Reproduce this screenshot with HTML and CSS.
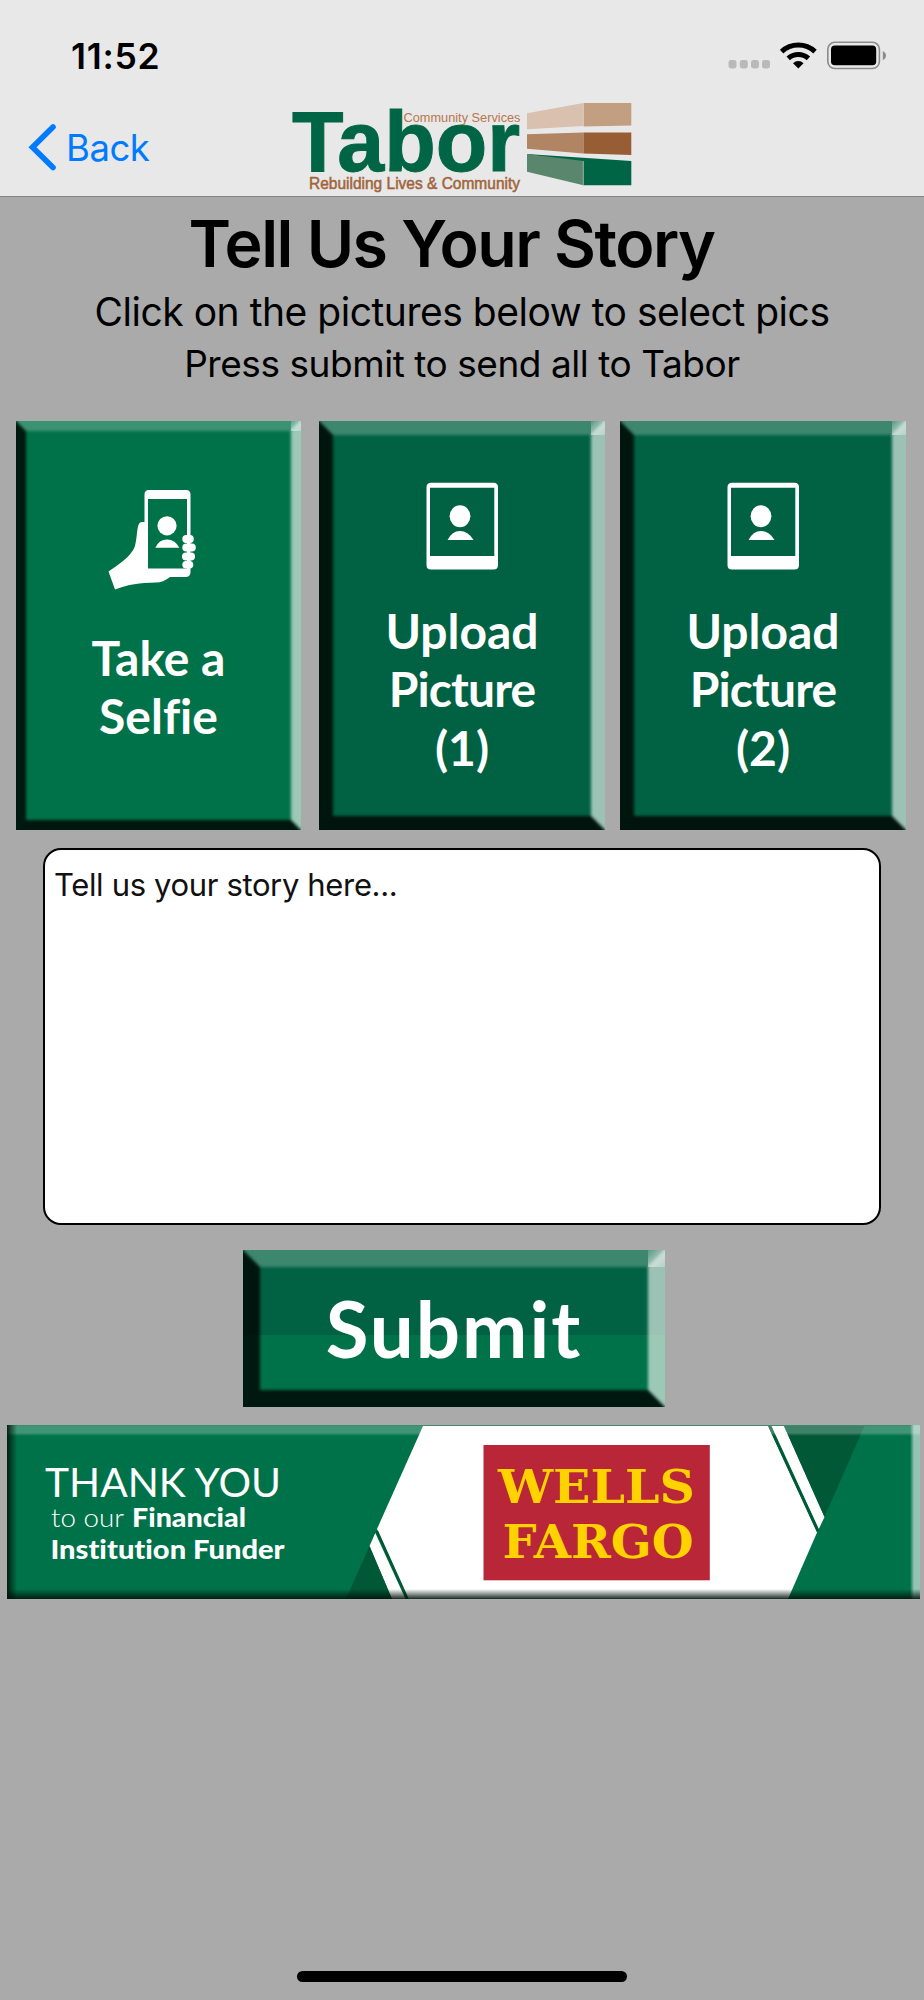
FILE: index.html
```html
<!DOCTYPE html>
<html lang="en">
<head>
<meta charset="utf-8">
<title>Tell Us Your Story</title>
<link rel="stylesheet" href="styles.css">
</head>
<body>
<div class="screen">
  <header class="top">
    <div class="status">
      <span class="time">11:52</span>
      <svg class="indicators" width="160" height="30" viewBox="727 41 160 30">
        <g fill="#b9b9b9">
          <rect x="728.5" y="60" width="8" height="8.4" rx="2.4"/>
          <rect x="739.8" y="60" width="8" height="8.4" rx="2.4"/>
          <rect x="751" y="60" width="8" height="8.4" rx="2.4"/>
          <rect x="762" y="60" width="8" height="8.4" rx="2.4"/>
        </g>
        <g fill="none" stroke="#000" stroke-width="5">
          <path d="M781.6 51.6A24.5 24.5 0 0 1 815 51.6"/>
          <path d="M788.2 58.3A15 15 0 0 1 808.4 58.3"/>
        </g>
        <path d="M798.3 68.4L793 63.2A7.5 7.5 0 0 1 803.6 63.2Z"/>
        <rect x="827.8" y="42.3" width="51.6" height="26.2" rx="7" fill="none" stroke="#8b8b8b" stroke-width="1.6"/>
        <rect x="831" y="45.6" width="45.2" height="19.6" rx="3.8"/>
        <path d="M882.8 51V60.2Q886 58.6 886 55.6T882.8 51Z" fill="#8b8b8b"/>
      </svg>
    </div>
    <nav class="nav">
      <a class="back"><svg width="30" height="48" viewBox="28 123 30 48"><path d="M53 127L32.5 147.3L53 167.6" fill="none" stroke="#007aff" stroke-width="5.6" stroke-linecap="round"/></svg><span>Back</span></a>
      <svg class="logo" width="346" height="96" viewBox="287 100 346 96" font-family="'Liberation Sans', Arial, sans-serif">
        <text x="292" y="170.800" font-size="85" font-weight="700" fill="#006544" stroke="#006544" textLength="228" lengthAdjust="spacingAndGlyphs">Tabor</text>
        <text x="403.5" y="122" font-size="13.6" fill="#b9754e" textLength="117" lengthAdjust="spacingAndGlyphs">Community Services</text>
        <text x="309" y="189.3" font-size="15.8" fill="#a0643a" stroke="#a0643a" stroke-width=".5" textLength="211" lengthAdjust="spacingAndGlyphs">Rebuilding Lives &amp; Community</text>
        <path fill="#dac1af" d="M527 113.3L583.5 103V126L527 129.3Z"/>
        <path fill="#c39f81" d="M583.5 103H631.3V125.6L583.5 126.4Z"/>
        <path fill="#b18463" d="M527 134.3L583.5 132.6V153.5L527 148.8Z"/>
        <path fill="#975d34" d="M583.5 132.6H631.3V155L583.5 153.5Z"/>
        <path fill="#006544" d="M527 154L631.3 161V185.3H583.5Z"/>
        <path fill="#5a866d" d="M527 154L583.5 161V185.3L527 171.8Z"/>
        <path fill="none" stroke="#e2d3c7" stroke-opacity=".6" d="M583.3 103V126M583.3 161V185"/>
      </svg>
    </nav>
  </header>

  <main>
    <h1>Tell Us Your Story</h1>
    <p class="lead"><span class="line-a">Click on the pictures below to select pics</span><br><span class="line-b">Press submit to send all to Tabor</span></p>

    <div class="tiles">
      <button class="tile bevel selfie">
        <svg width="90" height="102" viewBox="106 488 90 102">
          <path fill="#fff" fill-rule="evenodd" d="M148 490H185Q189.500 490 189.500 494.500V572Q189.500 577 184.500 577H169Q162 582.500 155 582.500C138 583 128 584 114 589.500L107.500 571.500C118 564 130 557 134 546C137 536 135 522 141 522H143.500V494.500Q143.500 490 148 490ZM147 499V568.500H186V499Z"/>
          <g fill="#fff">
            <circle cx="166" cy="525.8" r="9.6"/>
            <path d="M154.300 547.800Q158 539.500 166 539.500T178.300 547.800Z"/>
          </g>
          <g fill="#fff">
            <rect x="181.300" y="535" width="11.500" height="8" rx="4"/>
            <rect x="181.300" y="543.500" width="13.500" height="8" rx="4"/>
            <rect x="181" y="552.500" width="13" height="8" rx="4"/>
            <rect x="181.300" y="561" width="11" height="7.500" rx="3.700"/>
          </g>
        </svg>
        <span class="label">Take a<br>Selfie</span>
      </button>
      <button class="tile bevel deep">
        <svg width="72" height="88" viewBox="426 482 72 88"><use href="#portrait"/></svg>
        <span class="label">Upload<br><span class="tight">Picture</span><br>(1)</span>
      </button>
      <button class="tile bevel deep">
        <svg width="72" height="88" viewBox="426 482 72 88">
          <g id="portrait" fill="#fff">
            <path fill-rule="evenodd" d="M431 482.800H493.500Q498 482.800 498 487.300V565Q498 569.500 493.500 569.500H431Q426.500 569.500 426.500 565V487.300Q426.500 482.800 431 482.800ZM430 487.700V556H494.300V487.700Z"/>
            <ellipse cx="460" cy="516.300" rx="10.400" ry="11"/>
            <path d="M447.600 540Q452 531 460 531T473.600 540Z"/>
          </g>
        </svg>
        <span class="label">Upload<br><span class="tight">Picture</span><br>(2)</span>
      </button>
    </div>

    <textarea class="story" spellcheck="false">Tell us your story here...</textarea>

    <button class="submit bevel">Submit</button>

    <section class="banner">
      <svg width="913" height="174" viewBox="7 1425 913 174">
        <rect x="7" y="1425" width="913" height="174" fill="#00724a"/>
        <path fill="#fff" d="M423 1426H768L817 1532.500L788 1599H408L377 1529Z"/>
        <path fill="#fff" d="M375.300 1533L369.500 1546L392 1599H405.500Z"/>
        <path fill="#005836" d="M369.500 1546L346 1599H392Z"/>
        <path fill="#fff" d="M771.500 1426H784L824.500 1517L818.800 1529Z"/>
        <path fill="#005836" d="M784 1426H864.500L824.500 1517Z"/>
        <path stroke="#005836" stroke-width="2.600" d="M376.800 1531L407.500 1599M769.500 1426L818 1531"/>
        <g fill="#fff" font-family="Lato, sans-serif">
          <text x="45" y="1496.700" font-size="40.500" textLength="236" lengthAdjust="spacingAndGlyphs">THANK YOU</text>
          <text x="51" y="1527" font-size="25" font-weight="300" textLength="73" lengthAdjust="spacingAndGlyphs">to our</text>
          <text x="132" y="1527" font-size="26" font-weight="900" textLength="114" lengthAdjust="spacingAndGlyphs">Financial</text>
          <text x="50.500" y="1558.800" font-size="26" font-weight="900" textLength="234" lengthAdjust="spacingAndGlyphs">Institution Funder</text>
        </g>
        <rect x="483.500" y="1445" width="226.300" height="135.300" fill="#b82638"/>
        <g fill="#ffd200" font-family="'DejaVu Serif', serif" font-weight="700" font-size="47.500">
          <text x="498" y="1503" textLength="197" lengthAdjust="spacingAndGlyphs">WELLS</text>
          <text x="502.500" y="1557.500" textLength="191" lengthAdjust="spacingAndGlyphs">FARGO</text>
        </g>
      </svg>
    </section>
  </main>
  <div class="home"></div>
</div>
</body>
</html>
```
FILE: styles.css
```css
* { box-sizing: border-box; }
body { margin: 0; background: #aaa; }
button, textarea { border: 0; margin: 0; padding: 0; font: inherit; border-radius: 0; }
svg { display: block; flex: none; }

.screen {
  width: 924px;
  height: 2000px;
  background: #aaa;
  font-family: Inter, "Liberation Sans", sans-serif;
  color: #000;
  display: flex;
  flex-direction: column;
  overflow: hidden;
  font-variant-ligatures: none;
}

.top { height: 197px; background: #e8e8e8; border-bottom: 1px solid #858585; }
.status { height: 100px; padding: 34px 37px 0 71px; display: flex; justify-content: space-between; }
.time { font-size: 35.5px; font-weight: 600; line-height: 45px; letter-spacing: 0.7px; }
.indicators { margin-top: 7px; }
.nav { display: flex; height: 95px; }
.back { flex: none; width: 287px; padding: 23px 0 0 28px; display: flex; gap: 8px; color: #007aff; font-size: 36.5px; line-height: 50px; letter-spacing: -0.5px; }
.logo { overflow: visible; }

main { flex: 1; display: flex; flex-direction: column; }
h1 { margin: 8px 0 0; padding-right: 21px; font-size: 64.5px; line-height: 78px; font-weight: 600; text-align: center; letter-spacing: -1.5px; white-space: nowrap; }
.lead { margin: 3px 0 0; font-size: 39px; line-height: 51px; text-align: center; white-space: nowrap; }
.line-a { letter-spacing: -0.47px; }
.line-b { font-size: 37px; letter-spacing: -0.45px; }

.tiles { margin: 32px 18px 0 16px; display: flex; justify-content: space-between; }
.bevel { position: relative; overflow: hidden; color: #fff; font-family: Lato, sans-serif; font-weight: 700; font-variant-ligatures: none; }
.bevel::after {
  content: "";
  position: absolute;
  inset: -4px;
  border: calc(var(--edge) + 4px) solid;
  border-color: rgba(255,255,255,.24) rgba(255,255,255,.61) rgba(0,0,0,.8) rgba(0,0,0,.78);
  filter: blur(1.5px);
}
/* brighter corner where the two lit edges meet */
.bevel::before {
  content: "";
  position: absolute;
  top: 0;
  right: 0;
  width: var(--edge);
  height: var(--edge);
  background: linear-gradient(135deg, rgba(255,255,255,.15), rgba(255,255,255,.5) 50%, rgba(255,255,255,.25));
}
.tile { --edge: 10px; width: 286px; height: 409px; display: flex; flex-direction: column; align-items: center; justify-content: flex-start; background: #00724a; }
.deep { --edge: 14px; background: #006242; }
.tile svg { margin-top: 61px; }
.tile.selfie { width: 285px; margin-right: 3px; }
.tile.selfie svg { margin: 67px 0 0 -14px; }
.label { margin-top: 32px; font-size: 48px; line-height: 58.3px; text-align: center; }
.tight { letter-spacing: -0.9px; }
.selfie .label { margin-top: 39px; }

.story {
  display: block;
  width: 838px;
  height: 377px;
  margin: 18px 0 0 43px;
  padding: 16px 9px;
  border: 2px solid #000;
  border-radius: 18px;
  background: #fff;
  color: #111;
  font-size: 31px;
  line-height: 38px;
  letter-spacing: -0.35px;
  resize: none;
  outline: 0;
}

.submit { --edge: 17px; width: 422px; height: 157px; margin: 25px 0 0 243px; background: linear-gradient(#006242 85px, #00724a 85px); font-size: 78px; line-height: 155px; letter-spacing: 2px; }

.banner { position: relative; width: 913px; height: 174px; margin: 18px 0 0 7px; }
.banner::after {
  content: "";
  position: absolute;
  inset: 0;
  background:
    linear-gradient(to top, rgba(0,20,12,.9), rgba(0,0,0,0)) bottom / 100% 10px no-repeat,
    linear-gradient(to right, rgba(0,20,12,.9), rgba(0,0,0,0)) left / 10px 100% no-repeat,
    linear-gradient(to left, rgba(255,255,255,.58) 60%, rgba(255,255,255,0)) right / 10px 100% no-repeat,
    linear-gradient(#3f8a6c, #3f8a6c) top / 100% 1px no-repeat,
    linear-gradient(rgba(255,255,255,.25) 70%, rgba(255,255,255,0)) top / 100% 11px no-repeat;
}

.home { width: 330px; height: 11px; margin: 0 0 18px 297px; border-radius: 6px; background: #000; }
```
